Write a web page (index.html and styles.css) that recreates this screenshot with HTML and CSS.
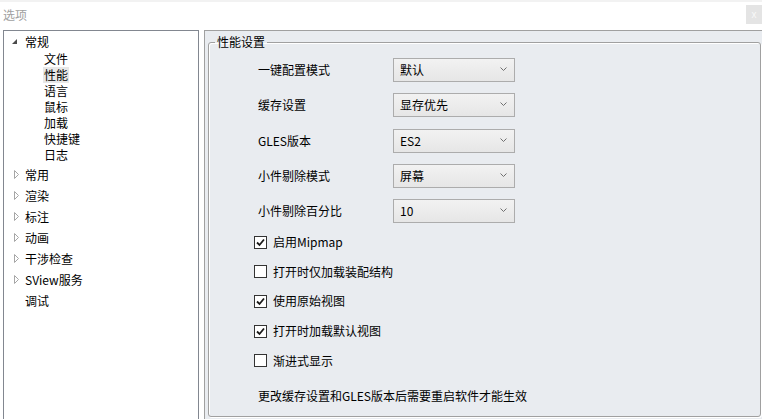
FILE: index.html
```html
<!DOCTYPE html>
<html lang="zh-CN">
<head>
<meta charset="utf-8">
<title>选项</title>
<link rel="stylesheet" href="styles.css">
</head>
<body>
<div class="window">
  <div class="titlebar">
    <span class="title">选项</span>
    <span class="close">x</span>
  </div>
  <div class="main">
    <div class="tree">
      <div class="node top expanded">
        <span class="exp"><svg width="5" height="5" viewBox="0 0 5 5"><polygon points="5,0 5,5 0,5" fill="#4a4a4a"/></svg></span>
        <span class="txt">常规</span>
      </div>
      <div class="children">
        <div class="node child"><span class="txt">文件</span></div>
        <div class="node child"><span class="txt sel">性能</span></div>
        <div class="node child"><span class="txt">语言</span></div>
        <div class="node child"><span class="txt">鼠标</span></div>
        <div class="node child"><span class="txt">加载</span></div>
        <div class="node child"><span class="txt">快捷键</span></div>
        <div class="node child"><span class="txt">日志</span></div>
      </div>
      <div class="collapsed-list">
        <div class="node top"><span class="exp"><svg width="6" height="9" viewBox="0 0 6 9"><polygon points="0.5,0.5 4.5,4.5 0.5,8.5" fill="#fff" stroke="#a6a6a6" stroke-width="1"/></svg></span><span class="txt">常用</span></div>
        <div class="node top"><span class="exp"><svg width="6" height="9" viewBox="0 0 6 9"><polygon points="0.5,0.5 4.5,4.5 0.5,8.5" fill="#fff" stroke="#a6a6a6" stroke-width="1"/></svg></span><span class="txt">渲染</span></div>
        <div class="node top"><span class="exp"><svg width="6" height="9" viewBox="0 0 6 9"><polygon points="0.5,0.5 4.5,4.5 0.5,8.5" fill="#fff" stroke="#a6a6a6" stroke-width="1"/></svg></span><span class="txt">标注</span></div>
        <div class="node top"><span class="exp"><svg width="6" height="9" viewBox="0 0 6 9"><polygon points="0.5,0.5 4.5,4.5 0.5,8.5" fill="#fff" stroke="#a6a6a6" stroke-width="1"/></svg></span><span class="txt">动画</span></div>
        <div class="node top"><span class="exp"><svg width="6" height="9" viewBox="0 0 6 9"><polygon points="0.5,0.5 4.5,4.5 0.5,8.5" fill="#fff" stroke="#a6a6a6" stroke-width="1"/></svg></span><span class="txt">干涉检查</span></div>
        <div class="node top"><span class="exp"><svg width="6" height="9" viewBox="0 0 6 9"><polygon points="0.5,0.5 4.5,4.5 0.5,8.5" fill="#fff" stroke="#a6a6a6" stroke-width="1"/></svg></span><span class="txt">SView服务</span></div>
        <div class="node top"><span class="exp"></span><span class="txt">调试</span></div>
      </div>
    </div>
    <div class="panel">
      <fieldset class="group">
        <legend>性能设置</legend>
        <div class="form">
          <span class="label">一键配置模式</span>
          <div class="combo"><span>默认</span><svg width="7" height="4" viewBox="0 0 7 4"><polyline points="0.5,0.5 3.5,3.5 6.5,0.5" fill="none" stroke="#707070" stroke-width="1"/></svg></div>
          <span class="label">缓存设置</span>
          <div class="combo"><span>显存优先</span><svg width="7" height="4" viewBox="0 0 7 4"><polyline points="0.5,0.5 3.5,3.5 6.5,0.5" fill="none" stroke="#707070" stroke-width="1"/></svg></div>
          <span class="label">GLES版本</span>
          <div class="combo"><span>ES2</span><svg width="7" height="4" viewBox="0 0 7 4"><polyline points="0.5,0.5 3.5,3.5 6.5,0.5" fill="none" stroke="#707070" stroke-width="1"/></svg></div>
          <span class="label">小件剔除模式</span>
          <div class="combo"><span>屏幕</span><svg width="7" height="4" viewBox="0 0 7 4"><polyline points="0.5,0.5 3.5,3.5 6.5,0.5" fill="none" stroke="#707070" stroke-width="1"/></svg></div>
          <span class="label">小件剔除百分比</span>
          <div class="combo"><span>10</span><svg width="7" height="4" viewBox="0 0 7 4"><polyline points="0.5,0.5 3.5,3.5 6.5,0.5" fill="none" stroke="#707070" stroke-width="1"/></svg></div>
        </div>
        <div class="checks">
          <div class="check"><span class="box"><svg width="11" height="11" viewBox="0 0 11 11"><polyline points="2,5.5 4.5,8 9,2.5" fill="none" stroke="#1a1a1a" stroke-width="1.8"/></svg></span><span>启用Mipmap</span></div>
          <div class="check"><span class="box"></span><span>打开时仅加载装配结构</span></div>
          <div class="check"><span class="box"><svg width="11" height="11" viewBox="0 0 11 11"><polyline points="2,5.5 4.5,8 9,2.5" fill="none" stroke="#1a1a1a" stroke-width="1.8"/></svg></span><span>使用原始视图</span></div>
          <div class="check"><span class="box"><svg width="11" height="11" viewBox="0 0 11 11"><polyline points="2,5.5 4.5,8 9,2.5" fill="none" stroke="#1a1a1a" stroke-width="1.8"/></svg></span><span>打开时加载默认视图</span></div>
          <div class="check"><span class="box"></span><span>渐进式显示</span></div>
        </div>
        <p class="note">更改缓存设置和GLES版本后需要重启软件才能生效</p>
      </fieldset>
    </div>
  </div>
</div>
</body>
</html>
```

FILE: styles.css
```css
html, body {
  margin: 0;
  padding: 0;
  width: 762px;
  height: 419px;
  overflow: hidden;
  background: #fff;
}
body {
  font-family: "Noto Sans CJK SC", "Microsoft YaHei", "Noto Sans", sans-serif;
  font-size: 12px;
  line-height: 16px;
  color: #000;
}
.window {
  display: flex;
  flex-direction: column;
}
.titlebar {
  height: 28px;
  border-top: 2px solid #f2f2f2;
  display: flex;
  align-items: flex-start;
  justify-content: space-between;
  padding-left: 3px;
}
.title {
  color: #a0a0a0;
  margin-top: 5px;
}
.close {
  margin-top: 3px;
  width: 16px;
  height: 19px;
  background: #e4e4e4;
  color: #f8f8f8;
  font-family: "Liberation Sans", sans-serif;
  font-size: 10px;
  line-height: 19px;
  text-align: center;
}
.main {
  display: flex;
  height: 392px;
  gap: 5px;
  padding-left: 3px;
}
.tree {
  width: 194px;
  border: 1px solid #828790;
  padding-top: 1px;
  box-sizing: content-box;
}
.node {
  display: flex;
  align-items: center;
}
.node.top {
  height: 21px;
}
.node.expanded {
  height: 19px;
}
.exp {
  width: 11px;
  padding-left: 10px;
  display: flex;
  align-items: center;
}
.expanded .exp {
  width: 13px;
  padding-left: 8px;
}
.children .node {
  height: 16px;
  padding-left: 39px;
}
.txt {
  padding: 0 1px;
}
.node.top .txt {
  padding: 0;
}
.txt.sel {
  background: #e8e8e8;
}
.collapsed-list {
  margin-top: 1px;
}
.panel {
  flex: 1;
  background: #e9ecf0;
  border-top: 1px solid #a0a0a0;
  border-left: 1px solid #a0a0a0;
  padding: 3px 1px 5px 3px;
  display: flex;
  flex-direction: column;
}
.group {
  flex: 1;
  margin: 0;
  padding: 8px 6px 0 6px;
  border: 1px solid #a0a0a0;
  border-radius: 3px;
  box-shadow: inset 1px 1px 0 #fff, 1px 1px 0 #fff;
  min-width: 0;
}
.group legend {
  padding: 0 2px;
  line-height: 16px;
}
.form {
  display: grid;
  grid-template-columns: 135px 122px;
  row-gap: 11.25px;
  margin-left: 43px;
  align-items: center;
}
.combo {
  height: 22px;
  border: 1px solid #acacac;
  background: linear-gradient(#f2f2f2, #e6e6e6);
  display: flex;
  align-items: center;
  justify-content: space-between;
  padding: 0 7px 0 6px;
  box-sizing: content-box;
  width: 107px;
}
.combo svg {
  margin-top: -2px;
}
.checks {
  margin-top: 11px;
  margin-left: 39px;
  display: flex;
  flex-direction: column;
  gap: 13.7px;
}
.check {
  display: flex;
  align-items: center;
  height: 16px;
  gap: 6px;
}
.box {
  width: 11px;
  height: 11px;
  border: 1px solid #333;
  background: #fff;
  display: flex;
  align-items: center;
  justify-content: center;
}
.note {
  margin: 19px 0 0 43px;
}
```
